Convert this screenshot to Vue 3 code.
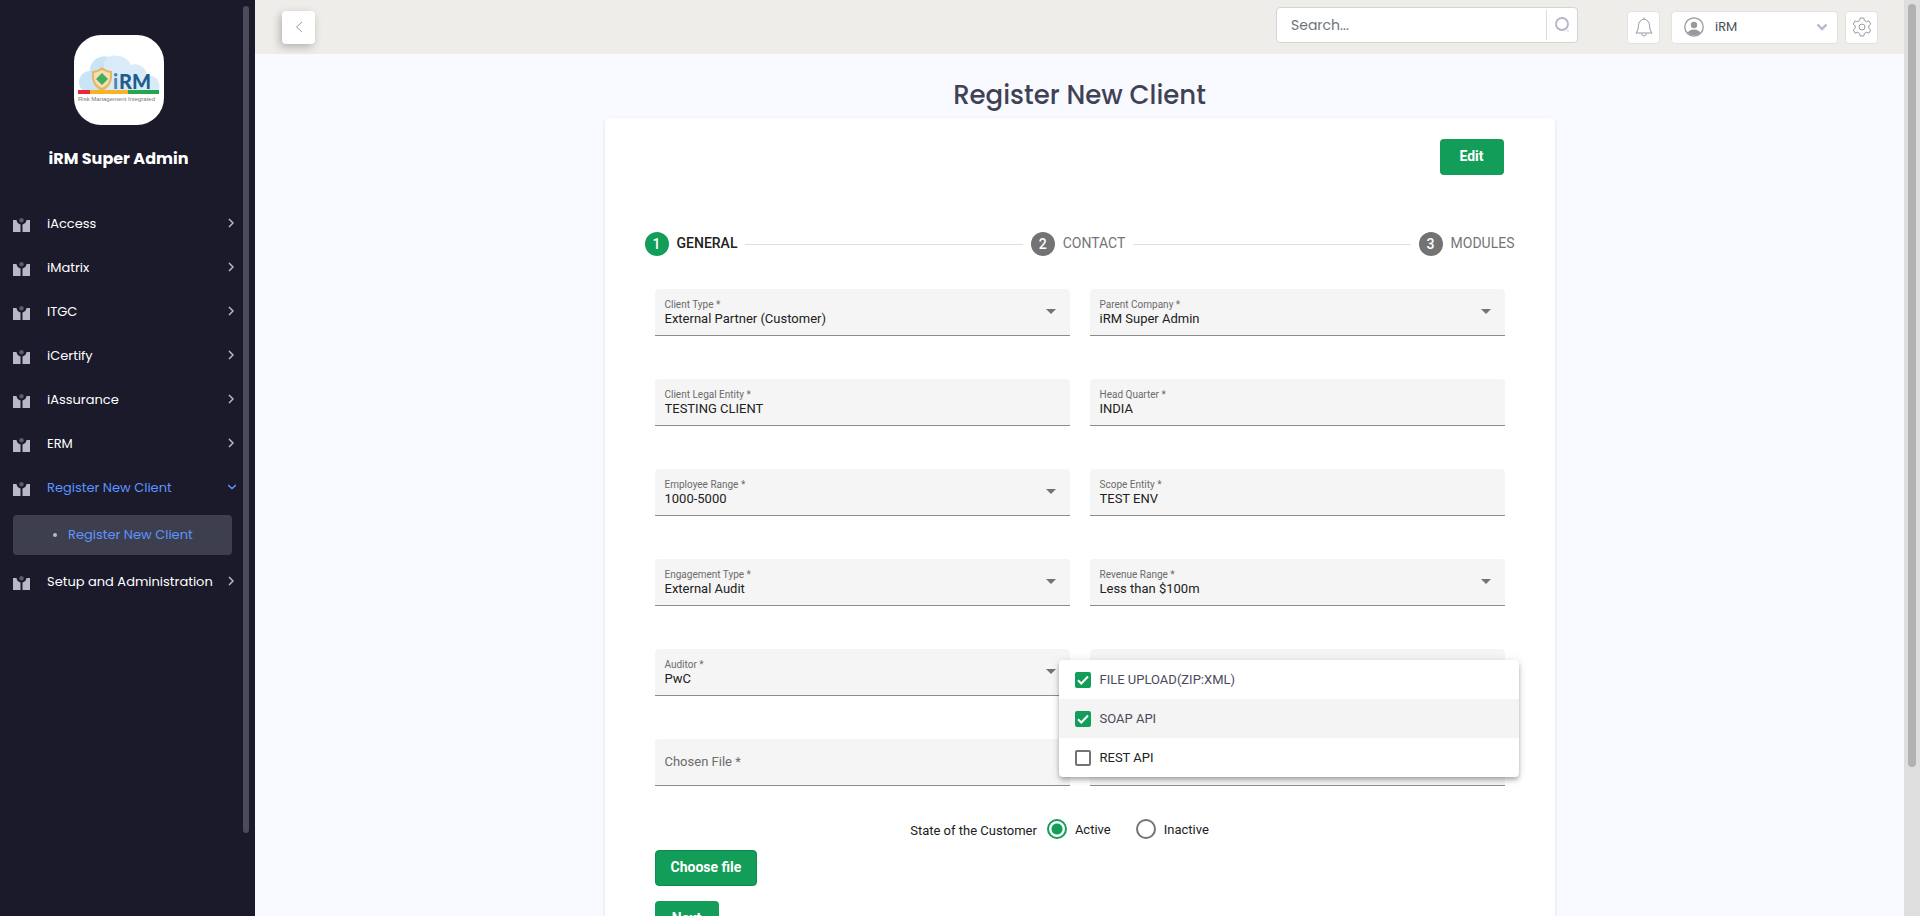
<script setup>
import { ref } from 'vue'

const menu = ['iAccess', 'iMatrix', 'ITGC', 'iCertify', 'iAssurance', 'ERM']

const fields = ref([
  { id: 'client-type', label: 'Client Type *', value: 'External Partner (Customer)', kind: 'select' },
  { id: 'parent-company', label: 'Parent Company *', value: 'iRM Super Admin', kind: 'select' },
  { id: 'legal-entity', label: 'Client Legal Entity *', value: 'TESTING CLIENT', kind: 'text' },
  { id: 'head-quarter', label: 'Head Quarter *', value: 'INDIA', kind: 'text' },
  { id: 'employee-range', label: 'Employee Range *', value: '1000-5000', kind: 'select' },
  { id: 'scope-entity', label: 'Scope Entity *', value: 'TEST ENV', kind: 'text' },
  { id: 'engagement-type', label: 'Engagement Type *', value: 'External Audit', kind: 'select' },
  { id: 'revenue-range', label: 'Revenue Range *', value: 'Less than $100m', kind: 'select' },
  { id: 'auditor', label: 'Auditor *', value: 'PwC', kind: 'select' },
  { id: 'method', label: 'Communication Method *', value: '', kind: 'multi' },
  { id: 'chosen-file', label: 'Chosen File *', value: '', kind: 'text' },
  { id: 'extra', label: '', value: '', kind: 'text' },
])

const methods = ref([
  { name: 'FILE UPLOAD(ZIP:XML)', checked: true },
  { name: 'SOAP API', checked: true, focused: true },
  { name: 'REST API', checked: false },
])

const steps = ['GENERAL', 'CONTACT', 'MODULES']
const state = ref('Active')
</script>

<template>
  <div class="shell">
    <aside class="sidebar">
      <div class="brand">
        <div class="logo">
          <svg width="84" height="52" viewBox="0 0 84 52" role="img" aria-label="iRM">
            <path d="M8 37C-1 34 0 18 13 17C13 6 23 1 31 3C39-1 51 3 54 11C62 8 70 14 70 22C79 20 84 27 82 37Z" fill="#d9ebf9" />
            <path d="M8 37C-1 34 0 18 13 17C13 6 23 1 31 3C25 8 26 16 31 20C24 22 20 30 25 37Z" fill="#c9e4f7" />
            <path d="M15 17Q20 17 25 13Q30 17 35 17V24Q34 33 25 37Q16 33 15 24Z" fill="#e5b765" />
            <path d="M17 19Q21 18 25 16Q29 18 33 19V24Q32 31 25 34Q18 31 17 24Z" fill="#f5dfae" />
            <path d="M25 19L31 25L25 31L19 25Z" fill="#3fae5f" />
            <text x="36" y="35" class="logo-i">i</text>
            <text x="42" y="35" class="logo-rm">RM</text>
            <rect x="1" y="36" width="13" height="4" fill="#e8263c" />
            <rect x="13" y="36" width="38" height="4" fill="#f6b325" />
            <rect x="51" y="36" width="31" height="4" fill="#26a452" />
            <text x="1" y="47" class="logo-tag">Risk Management Integrated</text>
          </svg>
        </div>
        <h2>iRM Super Admin</h2>
      </div>
      <nav>
        <a v-for="m in menu" :key="m" href="#" class="item">
          <svg class="glyph" width="17" height="14" viewBox="0 0 17 14"><path d="M0 2H3.5Q4 5.500 7.500 6.500V14H0ZM17 2H13.500Q13 5.500 9.500 6.500V14H17Z" fill="#b8b8c8" /><circle cx="8.500" cy="2.300" r="2.200" fill="#5b5b6d" /></svg>
          <span>{{ m }}</span>
          <svg class="chev" width="6" height="10" viewBox="0 0 6 10"><path d="M1 1L5 5L1 9" fill="none" stroke="#b8b8c8" stroke-width="1.500" /></svg>
        </a>
        <a href="#" class="item active">
          <svg class="glyph" width="17" height="14" viewBox="0 0 17 14"><path d="M0 2H3.5Q4 5.500 7.500 6.500V14H0ZM17 2H13.500Q13 5.500 9.500 6.500V14H17Z" fill="#b8b8c8" /><circle cx="8.500" cy="2.300" r="2.200" fill="#5b5b6d" /></svg>
          <span>Register New Client</span>
          <svg class="open" width="8" height="6" viewBox="0 0 8 6"><path d="M0 1L4 4.500L8 1" fill="none" stroke="#5d94ff" stroke-width="1.500" /></svg>
        </a>
        <a href="#" class="sub"><i></i>Register New Client</a>
        <a href="#" class="item">
          <svg class="glyph" width="17" height="14" viewBox="0 0 17 14"><path d="M0 2H3.5Q4 5.500 7.500 6.500V14H0ZM17 2H13.500Q13 5.500 9.500 6.500V14H17Z" fill="#b8b8c8" /><circle cx="8.500" cy="2.300" r="2.200" fill="#5b5b6d" /></svg>
          <span>Setup and Administration</span>
          <svg class="chev" width="6" height="10" viewBox="0 0 6 10"><path d="M1 1L5 5L1 9" fill="none" stroke="#b8b8c8" stroke-width="1.500" /></svg>
        </a>
      </nav>
      <div class="side-thumb"></div>
    </aside>

    <main>
      <header>
        <button class="toggle" type="button" aria-label="Collapse menu">
          <svg width="8" height="12" viewBox="0 0 8 12"><path d="M7 1L1.500 6L7 11" fill="none" stroke="#999" stroke-width="1" /></svg>
        </button>
        <form class="search" role="search" @submit.prevent>
          <input type="search" placeholder="Search..." aria-label="Search" />
          <button type="submit" aria-label="Search">
            <svg width="17" height="18" viewBox="0 0 17 18"><circle cx="8" cy="8" r="6" fill="none" stroke="#b5b5c9" stroke-width="1.800" /><path d="M11.500 13.500L15 16" stroke="#e0e0e8" stroke-width="1.500" /></svg>
          </button>
        </form>
        <button class="square bell" type="button" aria-label="Notifications">
          <svg width="18" height="20" viewBox="0 0 18 20" fill="none" stroke="#999" stroke-width="1"><path d="M1 16Q3.500 13.500 3.500 8.500C3.500 5 5.500 3 9 2C12.500 3 14.500 5 14.500 8.500Q14.500 13.500 17 16ZM9 .5V2M6.500 16.500Q7 19 9 19Q11 19 11.500 16.500" /></svg>
        </button>
        <button class="profile" type="button">
          <svg width="20" height="20" viewBox="0 0 20 20"><circle cx="10" cy="10" r="9.200" fill="none" stroke="#999" stroke-width="1.300" /><circle cx="10" cy="8" r="3.200" fill="#999" /><path d="M3.500 15.500Q6 12.500 10 12.500T16.500 15.500Q14 18.500 10 18.500T3.500 15.500Z" fill="#999" /></svg>
          <span>iRM</span>
          <svg width="12" height="8" viewBox="0 0 12 8"><path d="M1.500 1.500L6 6L10.500 1.500" fill="none" stroke="#b8b8cc" stroke-width="2.400" /></svg>
        </button>
        <button class="square" type="button" aria-label="Settings">
          <svg width="20" height="20" viewBox="0 0 20 20" fill="none" stroke="#999" stroke-width="1"><circle cx="10" cy="10" r="3" /><path d="M8.200 1H11.800L12.400 3.600L14.400 4.700L16.900 3.900L18.700 7L16.800 8.900V11.100L18.700 13L16.900 16.100L14.400 15.300L12.400 16.400L11.800 19H8.200L7.600 16.400L5.600 15.300L3.100 16.100L1.300 13L3.200 11.100V8.900L1.300 7L3.100 3.900L5.600 4.700L7.600 3.600Z" stroke-linejoin="round" /></svg>
        </button>
      </header>

      <section class="page">
        <h1>Register New Client</h1>
        <form class="card" @submit.prevent>
          <div class="top-actions"><button class="primary" type="button">Edit</button></div>

          <ol class="stepper">
            <li v-for="(s, i) in steps" :key="s" :class="{ current: i === 0 }">
              <b>{{ i + 1 }}</b><span>{{ s }}</span>
            </li>
          </ol>

          <div class="grid">
            <div v-for="f in fields" :key="f.id" class="field" :class="{ floating: f.value || f.kind === 'multi' }">
              <label v-if="f.label" :for="f.id">{{ f.label }}</label>
              <select v-if="f.kind === 'select'" :id="f.id" v-model="f.value">
                <option>{{ f.value }}</option>
              </select>
              <button v-else-if="f.kind === 'multi'" :id="f.id" type="button" class="multi" aria-haspopup="listbox" aria-expanded="true"></button>
              <input v-else :id="f.id" v-model="f.value" type="text" :aria-label="f.label ? null : 'Details'" />
              <svg v-if="f.kind === 'select'" class="caret" width="10" height="5" viewBox="0 0 10 5"><path d="M0 0H10L5 5Z" fill="#737373" /></svg>
              <div v-if="f.kind === 'multi'" class="panel">
                <label v-for="m in methods" :key="m.name" class="option" :class="{ focused: m.focused, checked: m.checked }">
                  <input v-model="m.checked" type="checkbox" />
                  <svg v-if="m.checked" class="tick" width="16" height="16" viewBox="0 0 16 16"><path d="M3 8.300L6.300 11.500L13 4.500" fill="none" stroke="#fff" stroke-width="2" /></svg>
                  <span>{{ m.name }}</span>
                </label>
              </div>
            </div>
          </div>

          <div class="state" role="radiogroup" aria-labelledby="state-label">
            <span id="state-label">State of the Customer</span>
            <label v-for="s in ['Active', 'Inactive']" :key="s"><input v-model="state" type="radio" name="state" :value="s" />{{ s }}</label>
          </div>

          <div class="bottom-actions">
            <button class="primary choose" type="button">Choose file</button>
            <button class="primary" type="submit">Next</button>
          </div>
        </form>
      </section>
    </main>

    <div class="track"><div class="thumb"></div></div>
  </div>
</template>

<style>
body {
  margin: 0;
  overflow: hidden;
}
</style>

<style scoped>
* {
  box-sizing: border-box;
}
.shell {
  display: flex;
  height: 100vh;
  overflow: hidden;
  background: #f9faff;
  font-family: Roboto, "Liberation Sans", sans-serif;
  font-size: 13px;
  color: #212121;
}
button,
input,
select {
  font: inherit;
  color: inherit;
}
a {
  text-decoration: none;
}

.sidebar {
  position: relative;
  flex: 0 0 255px;
  background: #1a1a2b;
  font-family: Poppins, Inter, sans-serif;
}
.brand {
  display: flex;
  flex-direction: column;
  align-items: center;
  padding: 35px 18px 0 0;
}
.logo {
  display: grid;
  place-items: center;
  width: 90px;
  height: 90px;
  border-radius: 27px;
  background: #fff;
}
.logo-i,
.logo-rm {
  font: 900 20px Lato, sans-serif;
  fill: #1f5d8c;
}
.logo-i {
  fill: #4a86ae;
}
.logo-tag {
  font: 6px "Liberation Sans", sans-serif;
  fill: #777;
}
.brand h2 {
  margin: 22px 0 0;
  font-size: 16px;
  line-height: 24px;
  font-weight: 700;
  color: #fff;
}
nav {
  padding: 30px 21px 0 13px;
}
.item {
  display: flex;
  align-items: center;
  height: 44px;
  color: #fff;
}
.item span {
  flex: 1;
  margin-left: 17px;
  padding-top: 2px;
  white-space: nowrap;
}
.item .glyph {
  margin-top: 4px;
}
.item .open {
  margin-right: -2px;
}
.item.active,
.sub {
  color: #5d94ff;
}
.sub {
  display: flex;
  align-items: center;
  gap: 11px;
  height: 40px;
  margin: 6px 2px 4px 0;
  padding-left: 40px;
  border-radius: 4px;
  background: #3e3f4e;
}
.sub i {
  width: 4px;
  height: 4px;
  border-radius: 50%;
  background: #b8b8c8;
}
.side-thumb {
  position: absolute;
  top: 6px;
  right: 6px;
  bottom: 83px;
  width: 6px;
  border-radius: 3px;
  background: #4b4c5a;
}

main {
  flex: 1;
  min-width: 0;
}
header {
  display: flex;
  align-items: center;
  height: 54px;
  padding: 0 26px 0 27px;
  background: #eeede9;
  font-family: Poppins, Inter, sans-serif;
}
header button {
  padding: 0;
  border: 0;
  background: none;
}
header svg {
  display: block;
}
header .toggle,
header .square {
  display: grid;
  place-items: center;
  width: 33px;
  height: 33px;
  border-radius: 4px;
  background: #fff;
}
header .square {
  border: 1px solid #e2e2e2;
}
header .toggle {
  box-shadow: -2px 3px 8px rgba(0, 0, 0, 0.25);
}
.search {
  display: flex;
  align-items: center;
  width: 302px;
  height: 36px;
  margin: 0 49px 4px auto;
  border: 1px solid #d4d4d4;
  border-radius: 4px;
  background: #fff;
}
.search input {
  flex: 1;
  min-width: 0;
  padding: 0 14px;
  border: 0;
  outline: 0;
  background: none;
  font-size: 14px;
}
.search input::placeholder {
  color: #6c757d;
  opacity: 1;
}
.search button {
  display: grid;
  place-items: center;
  width: 31px;
  height: 30px;
  border-left: 1px solid #dcdcdc;
}
header .profile {
  display: flex;
  align-items: center;
  width: 167px;
  height: 33px;
  margin: 0 7px 0 11px;
  padding: 0 9px 0 12px;
  border: 1px solid #e2e2e2;
  border-radius: 4px;
  background: #fff;
  color: #495057;
}
.profile span {
  flex: 1;
  margin-left: 11px;
  text-align: left;
}

.page {
  padding: 21px 24px 0;
}
h1 {
  margin: 0;
  font: 500 26px/40px Poppins, Inter, sans-serif;
  text-align: center;
  color: #3f4254;
}
.card {
  max-width: 950px;
  margin: 3px auto 0;
  padding: 21px 40px 40px;
  border-radius: 4px;
  background: #fff;
  box-shadow: 0 1px 3px rgba(0, 0, 0, 0.14);
}
.top-actions {
  display: flex;
  justify-content: flex-end;
  padding-right: 11px;
}
.primary {
  height: 36px;
  min-width: 64px;
  padding: 0 15px 2px;
  border: 0;
  border-radius: 4px;
  background: #129d58;
  color: #fff;
  font-size: 14px;
  font-weight: 700;
}
.choose {
  border: 1px solid #108a4d;
}
.stepper {
  display: flex;
  margin: 57px 0 33px;
  padding: 0;
  list-style: none;
  font-size: 14px;
  color: #757575;
}
.stepper li {
  display: flex;
  align-items: center;
  gap: 8px;
}
.stepper span {
  padding-bottom: 2px;
}
.stepper li:not(:last-child) {
  flex: 1 1 auto;
}
.stepper li:not(:last-child)::after {
  content: "";
  flex: 1;
  height: 1px;
  margin-right: 8px;
  background: #dedede;
}
.stepper b {
  display: grid;
  place-items: center;
  width: 24px;
  height: 24px;
  border-radius: 50%;
  background: #737373;
  color: #fff;
  font-weight: 500;
}
.stepper .current {
  color: #212121;
  font-weight: 500;
}
.stepper .current b {
  background: #129d58;
}

.grid {
  display: grid;
  grid-template-columns: 1fr 1fr;
  gap: 43px 20px;
  padding: 0 10px;
}
.field {
  position: relative;
  height: 47px;
  border-bottom: 1px solid #8c8c8c;
  border-radius: 4px 4px 0 0;
  background: #f5f5f5;
}
.field > label {
  position: absolute;
  top: 15px;
  left: 10px;
  line-height: 16px;
  color: #6b6b6b;
}
.field.floating > label {
  top: 10px;
  font-size: 10px;
  line-height: 12px;
}
.field > select,
.field > input,
.multi {
  display: block;
  width: 100%;
  height: 46px;
  padding: 13px 30px 0 10px;
  border: 0;
  outline: 0;
  background: none;
  appearance: none;
}
.caret {
  position: absolute;
  top: 20px;
  right: 14px;
}
.panel {
  position: absolute;
  z-index: 2;
  top: 11px;
  left: -31px;
  right: -14px;
  border-radius: 4px;
  background: #fff;
  box-shadow: 0 2px 4px -1px rgba(0, 0, 0, 0.2), 0 4px 5px rgba(0, 0, 0, 0.14), 0 1px 10px rgba(0, 0, 0, 0.12);
}
.option {
  position: relative;
  display: flex;
  align-items: center;
  gap: 9px;
  height: 39px;
  padding: 0 16px;
}
.option.checked {
  color: #4a4a5c;
}
.option.focused {
  background: #f4f4f4;
}
.option input {
  width: 16px;
  height: 16px;
  margin: 0;
  border: 2px solid #737373;
  border-radius: 2px;
  appearance: none;
}
.option input:checked {
  border-color: #129d58;
  background: #129d58;
}
.tick {
  position: absolute;
  left: 16px;
  pointer-events: none;
}

.state {
  display: flex;
  justify-content: center;
  align-items: center;
  height: 20px;
  margin: 33px 0 11px;
  padding-right: 40px;
}
.state > span {
  padding-top: 3px;
}
.state label {
  display: flex;
  align-items: center;
  gap: 8px;
  margin-left: 10px;
}
.state label + label {
  margin-left: 25px;
}
.state input {
  width: 20px;
  height: 20px;
  margin: 0;
  border: 2px solid #737373;
  border-radius: 50%;
  appearance: none;
}
.state input:checked {
  border-color: #129d58;
  background: radial-gradient(circle, #129d58 5px, #fff 6px);
}
.bottom-actions {
  display: flex;
  flex-direction: column;
  align-items: flex-start;
  gap: 15px;
  padding: 0 10px;
}

.track {
  flex: 0 0 16px;
  padding: 4px;
  background: #dedede;
}
.thumb {
  height: 84%;
  border-radius: 4px;
  background: #b1b1b1;
}
</style>
